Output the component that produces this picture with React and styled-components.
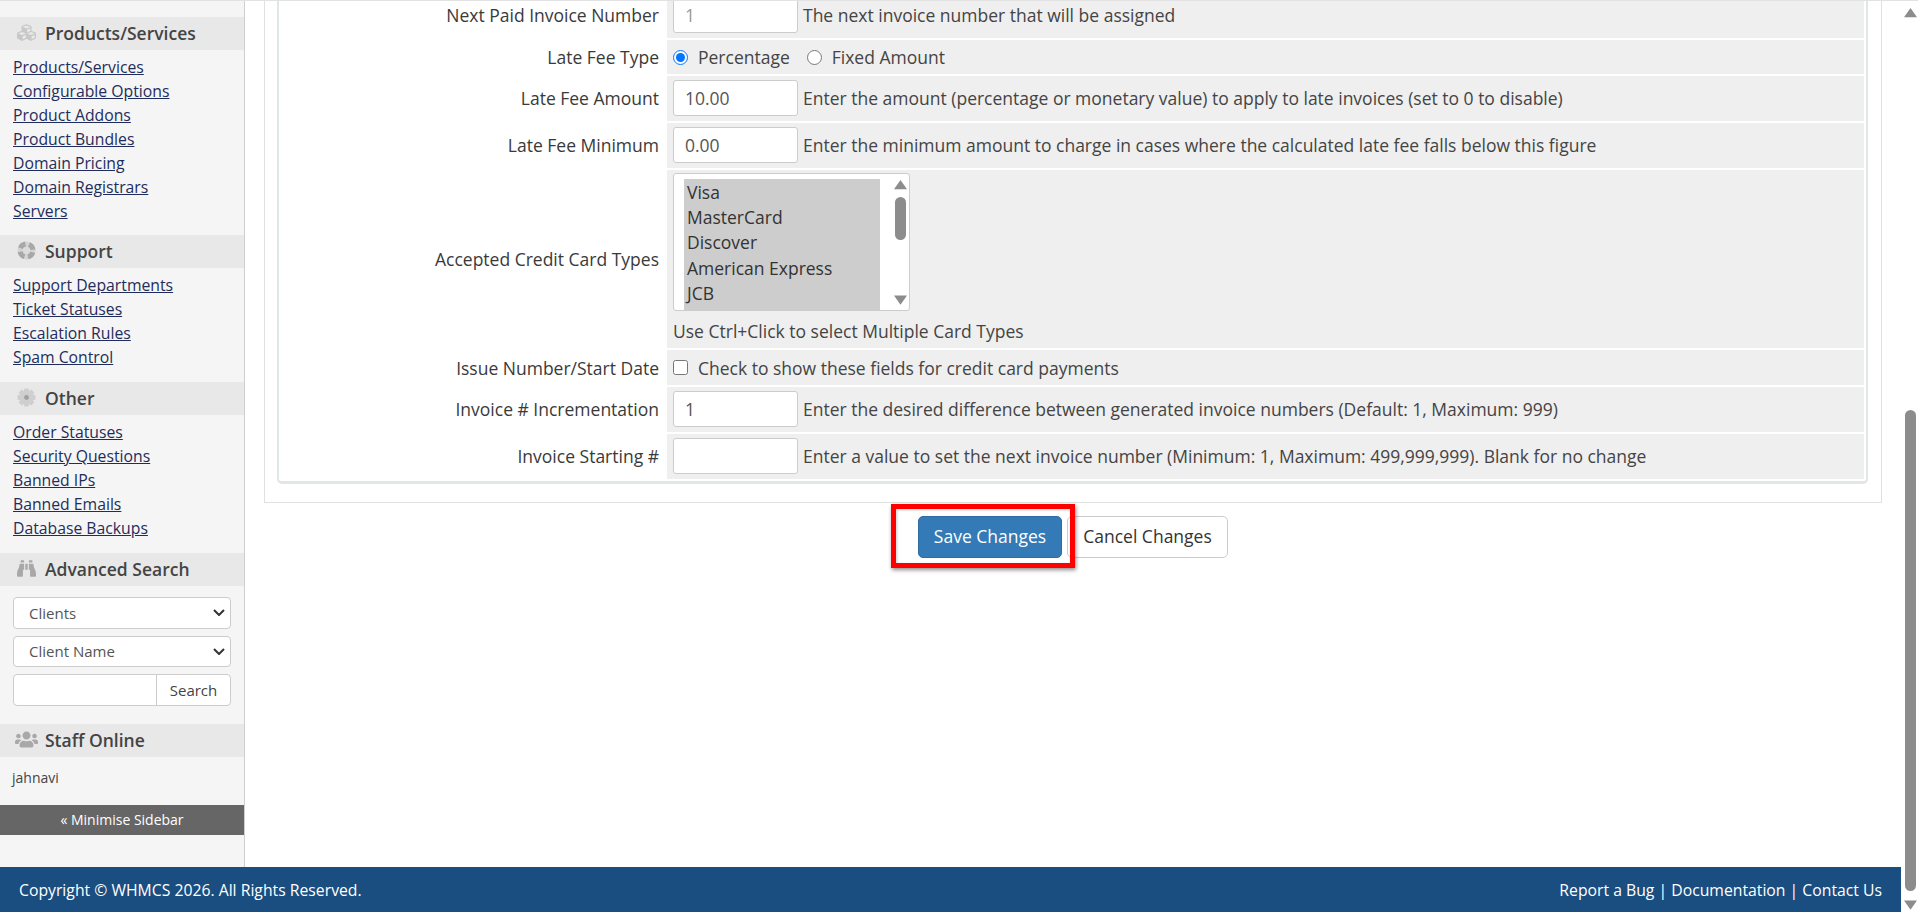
import React from "react";
import styled, { createGlobalStyle } from "styled-components";
import { FaCubes, FaBinoculars, FaUsers } from "react-icons/fa";

const Global = createGlobalStyle`
  html, body { margin: 0; padding: 0; height: 100%; overflow: hidden; background: #fff; }
  body { font-family: "Open Sans", "Noto Sans", sans-serif; color: #333; }
  * { box-sizing: border-box; }
`;

const chevron =
  "url(\"data:image/svg+xml,%3Csvg xmlns='http://www.w3.org/2000/svg' width='12' height='7' viewBox='0 0 12 7'%3E%3Cpath d='M1 1l5 5 5-5' fill='none' stroke='%23333' stroke-width='2'/%3E%3C/svg%3E\")";

const Page = styled.div`
  height: 912px;
  display: grid;
  grid-template-columns: 1fr 17px;
  border-top: 1px solid #e2e2e2;
  overflow: hidden;
`;
const Left = styled.div`
  display: flex;
  flex-direction: column;
  min-width: 0;
  height: 911px;
`;
const Body = styled.div`
  flex: 1;
  display: flex;
  min-height: 0;
`;
const Sidebar = styled.aside`
  width: 245px;
  flex: none;
  background: #f5f5f5;
  border-right: 1px solid #cfcfcf;
  padding-top: 16px;
`;
const Heading = styled.h3`
  margin: 0;
  height: 33px;
  padding-bottom: 2px;
  background: #e8e8e8;
  display: flex;
  align-items: center;
  font-size: 17.5px;
  font-weight: 600;
  color: #444;
`;
const HeadIcon = styled.span`
  width: 45px;
  flex: none;
  padding-left: 8px;
  display: flex;
  justify-content: center;
  color: ${p => p.$color || "#c8c8c8"};
  font-size: ${p => p.$size || 19}px;
`;
const Links = styled.ul`
  list-style: none;
  margin: 0;
  padding: 5px 13px 0;
  height: ${p => p.$h}px;
`;
const Item = styled.li`
  height: 24px;
  line-height: 24px;
  font-size: 15.75px;
  a { color: #1f2d5c; text-decoration: underline; }
`;
const SearchForm = styled.div`
  padding: 11px 13px 18.5px;
  display: flex;
  flex-direction: column;
  gap: 7px;
`;
const SideSelect = styled.select`
  appearance: none;
  width: 218px;
  height: 31.5px;
  background: #fff ${chevron} no-repeat right 5px center;
  border: 1px solid #ccc;
  border-radius: 4px;
  font: 15px "Open Sans", sans-serif;
  color: #555;
  padding-left: 15px;
`;
const SearchGroup = styled.div`
  display: flex;
  width: 218px;
  height: 31.5px;
  background: #fff;
  border: 1px solid #ccc;
  border-radius: 4px;
`;
const SearchInput = styled.input`
  flex: 1;
  min-width: 0;
  border: 0;
  border-right: 1px solid #ccc;
  background: transparent;
  border-radius: 4px 0 0 4px;
`;
const SearchButton = styled.button`
  width: 73px;
  border: 0;
  background: transparent;
  font: 15px "Open Sans", sans-serif;
  color: #444;
  padding: 0;
`;
const StaffName = styled.div`
  height: 48px;
  padding: 9px 12px 0;
  font-size: 14px;
  line-height: 24px;
  color: #444;
`;
const Minimise = styled.div`
  height: 30px;
  background: #666;
  color: #fff;
  text-align: center;
  line-height: 30px;
  font-size: 14px;
`;
const Main = styled.main`
  flex: 1;
  min-width: 0;
  background: #fff;
  padding: 0 19px;
  overflow: hidden;
`;
const Box = styled.div`
  margin-top: -11px;
  border: 1px solid #e0e0e0;
  padding: 0 13px 18px 12px;
  width: 1618px;
`;
const Table = styled.div`
  display: flex;
  flex-direction: column;
  gap: 2px;
  padding: 2px;
  border: 2px solid #e1e6e6;
  border-top: 0;
  border-bottom-width: 3px;
  border-radius: 0 0 5px 5px;
`;
const Row = styled.div`
  display: grid;
  grid-template-columns: 383px 1fr;
  gap: 3px;
  height: ${p => p.$h}px;
`;
const Label = styled.div`
  display: flex;
  align-items: center;
  justify-content: flex-end;
  padding-right: 5px;
  padding-bottom: ${p => (p.$tight ? "1px" : "0")};
  font-size: 17.5px;
  color: #3a3a3a;
`;
const Value = styled.div`
  background: #efefef;
  display: flex;
  align-items: ${p => (p.$col ? "flex-start" : "center")};
  flex-direction: ${p => (p.$col ? "column" : "row")};
  padding-left: 6px;
  padding-bottom: ${p => (p.$tight ? "1px" : "0")};
  font-size: 17.5px;
  color: #444;
  gap: 5px;
`;
const TextInput = styled.input`
  width: 125px;
  height: 36px;
  flex: none;
  border: 1px solid #ccc;
  border-radius: 3px;
  background: #fff;
  padding: 0 11px;
  font: 17.5px "Open Sans", sans-serif;
  color: #555;
  &:disabled { color: #999; }
`;
const Choice = styled.label`
  display: flex;
  align-items: center;
  gap: 10px;
  margin-right: 12px;
  input { margin: 0; width: 15px; height: 15px; }
`;
const ListBox = styled.div`
  margin-top: 3px;
  width: 237px;
  height: 138px;
  flex: none;
  background: #fff;
  border: 1px solid #ccc;
  border-radius: 3px;
  display: flex;
  overflow: hidden;
  padding: 5px 0 0 10px;
`;
const Options = styled.div`
  width: 196px;
  background: #cdcdcd;
  flex: none;
  padding: 0.5px 0 0 3px;
  color: #333;
`;
const Option = styled.div`
  height: 25.4px;
  line-height: 25.4px;
  font-size: 17.5px;
`;
const ListScroll = styled.div`
  flex: 1;
  display: flex;
  flex-direction: column;
  align-items: flex-end;
  padding: 1px 2px 5px 0;
`;
const ListThumb = styled.div`
  width: 11px;
  height: 43px;
  margin: 7px 1px auto 0;
  border-radius: 6px;
  background: #8c8c8c;
`;
const Hint = styled.div`
  margin-top: 3px;
`;
const Actions = styled.div`
  position: relative;
  display: flex;
  justify-content: center;
  gap: 5px;
  padding-top: 13px;
`;
const Btn = styled.button`
  height: 42px;
  width: ${p => p.$w}px;
  border-radius: 5px;
  border: 1px solid ${p => (p.$primary ? "#2e6da4" : "#ccc")};
  background: ${p => (p.$primary ? "#337ab7" : "#fff")};
  color: ${p => (p.$primary ? "#fff" : "#333")};
  font: 17.5px "Open Sans", sans-serif;
  padding: 0 0 2px;
`;
const Highlight = styled.div`
  position: absolute;
  left: 627px;
  top: 1px;
  width: 184px;
  height: 64px;
  border: 5px solid #f00;
  box-shadow: 1px 2px 4px rgba(0,0,0,.45), inset 1px 1px 3px rgba(0,0,0,.2);
  pointer-events: none;
`;
const Footer = styled.footer`
  height: 45px;
  flex: none;
  background: #1a4d80;
  color: #fff;
  display: flex;
  align-items: center;
  justify-content: space-between;
  padding: 0 19px;
  font-size: 15.75px;
`;
const Scrollbar = styled.div`
  background: #fff;
  display: flex;
  flex-direction: column;
  align-items: center;
  padding: 7px 1px 2px 3px;
  height: 911px;
`;
const Thumb = styled.div`
  width: 11px;
  flex: 1;
  margin: 392px 0 9px;
  border-radius: 6px;
  background: #8c8c8c;
`;
const Arrow = ({ down, size = 13 }) => (
  <svg width={size} height={size * 0.75} viewBox="0 0 12 9" style={{ flex: "none", display: "block" }}>
    <path d={down ? "M0 0.5h12L6 9z" : "M6 0L12 8.5H0z"} fill="#8c8c8c" />
  </svg>
);
const RingIcon = () => (
  <svg width="19" height="19" viewBox="0 0 19 19">
    <circle cx="9.5" cy="9.5" r="9" fill="#d4d4d4" />
    <circle cx="9.5" cy="9.5" r="6.5" fill="none" stroke="#a8a8a8" strokeWidth="5"
      strokeDasharray="6.5 3.71" strokeDashoffset="-1.85" />
    <circle cx="9.5" cy="9.5" r="3.6" fill="#dcdcdc" />
  </svg>
);
const GearIcon = () => (
  <svg width="19" height="19" viewBox="0 0 19 19">
    {[0, 45, 90, 135].map(a => (
      <rect key={a} x="7" y="0.5" width="5" height="18" rx="1" fill="#cfcfcf" transform={`rotate(${a} 9.5 9.5)`} />
    ))}
    <circle cx="9.5" cy="9.5" r="7" fill="#cfcfcf" />
    <circle cx="9.5" cy="9.5" r="2.4" fill="#a0a0a0" />
  </svg>
);

const groups = [
  { title: "Products/Services", icon: <FaCubes />, h: 185, links: ["Products/Services","Configurable Options","Product Addons","Product Bundles","Domain Pricing","Domain Registrars","Servers"] },
  { title: "Support", icon: <RingIcon />, h: 114, links: ["Support Departments","Ticket Statuses","Escalation Rules","Spam Control"] },
  { title: "Other", icon: <GearIcon />, h: 138, links: ["Order Statuses","Security Questions","Banned IPs","Banned Emails","Database Backups"] },
];

const rows = [
  { label: "Late Fee Amount", value: "10.00", help: "Enter the amount (percentage or monetary value) to apply to late invoices (set to 0 to disable)" },
  { label: "Late Fee Minimum", value: "0.00", help: "Enter the minimum amount to charge in cases where the calculated late fee falls below this figure" },
];
const rowsAfter = [
  { label: "Invoice # Incrementation", value: "1", help: "Enter the desired difference between generated invoice numbers (Default: 1, Maximum: 999)" },
  { label: "Invoice Starting #", value: "", help: "Enter a value to set the next invoice number (Minimum: 1, Maximum: 499,999,999). Blank for no change" },
];
const InputRow = ({ label, value, help, disabled }) => (
  <Row $h={45}>
    <Label $tight>{label}</Label>
    <Value $tight><TextInput disabled={disabled} readOnly value={value} />{help}</Value>
  </Row>
);

export default function App() {
  return (
    <Page>
      <Global />
      <Left>
        <Body>
          <Sidebar>
            {groups.map(g => (
              <React.Fragment key={g.title}>
                <Heading><HeadIcon>{g.icon}</HeadIcon>{g.title}</Heading>
                <Links $h={g.h}>
                  {g.links.map(l => <Item key={l}><a href="#">{l}</a></Item>)}
                </Links>
              </React.Fragment>
            ))}
            <Heading><HeadIcon $color="#a8a8a8"><FaBinoculars /></HeadIcon>Advanced Search</Heading>
            <SearchForm>
              <SideSelect defaultValue="Clients"><option>Clients</option></SideSelect>
              <SideSelect defaultValue="Client Name"><option>Client Name</option></SideSelect>
              <SearchGroup><SearchInput /><SearchButton>Search</SearchButton></SearchGroup>
            </SearchForm>
            <Heading><HeadIcon $size={23} $color="#a8a8a8"><FaUsers /></HeadIcon>Staff Online</Heading>
            <StaffName>jahnavi</StaffName>
            <Minimise>« Minimise Sidebar</Minimise>
          </Sidebar>
          <Main>
            <Box>
              <Table>
                <InputRow label="Next Paid Invoice Number" value="1" disabled help="The next invoice number that will be assigned" />
                <Row $h={34}>
                  <Label>Late Fee Type</Label>
                  <Value>
                    <Choice><input type="radio" name="fee" defaultChecked />Percentage</Choice>
                    <Choice><input type="radio" name="fee" />Fixed Amount</Choice>
                  </Value>
                </Row>
                {rows.map(r => <InputRow key={r.label} {...r} />)}
                <Row $h={178}>
                  <Label>Accepted Credit Card Types</Label>
                  <Value $col>
                    <ListBox>
                      <Options>
                        {["Visa","MasterCard","Discover","American Express","JCB"].map(o => <Option key={o}>{o}</Option>)}
                      </Options>
                      <ListScroll>
                        <Arrow />
                        <ListThumb />
                        <Arrow down />
                      </ListScroll>
                    </ListBox>
                    <Hint>Use Ctrl+Click to select Multiple Card Types</Hint>
                  </Value>
                </Row>
                <Row $h={35}>
                  <Label>Issue Number/Start Date</Label>
                  <Value>
                    <Choice><input type="checkbox" />Check to show these fields for credit card payments</Choice>
                  </Value>
                </Row>
                {rowsAfter.map(r => <InputRow key={r.label} {...r} />)}
              </Table>
            </Box>
            <Actions>
              <Btn $primary $w={144}>Save Changes</Btn>
              <Btn $w={161}>Cancel Changes</Btn>
              <Highlight />
            </Actions>
          </Main>
        </Body>
        <Footer>
          <span>Copyright © WHMCS 2026. All Rights Reserved.</span>
          <span>Report a Bug | Documentation | Contact Us</span>
        </Footer>
      </Left>
      <Scrollbar>
        <Arrow />
        <Thumb />
        <Arrow down />
      </Scrollbar>
    </Page>
  );
}
